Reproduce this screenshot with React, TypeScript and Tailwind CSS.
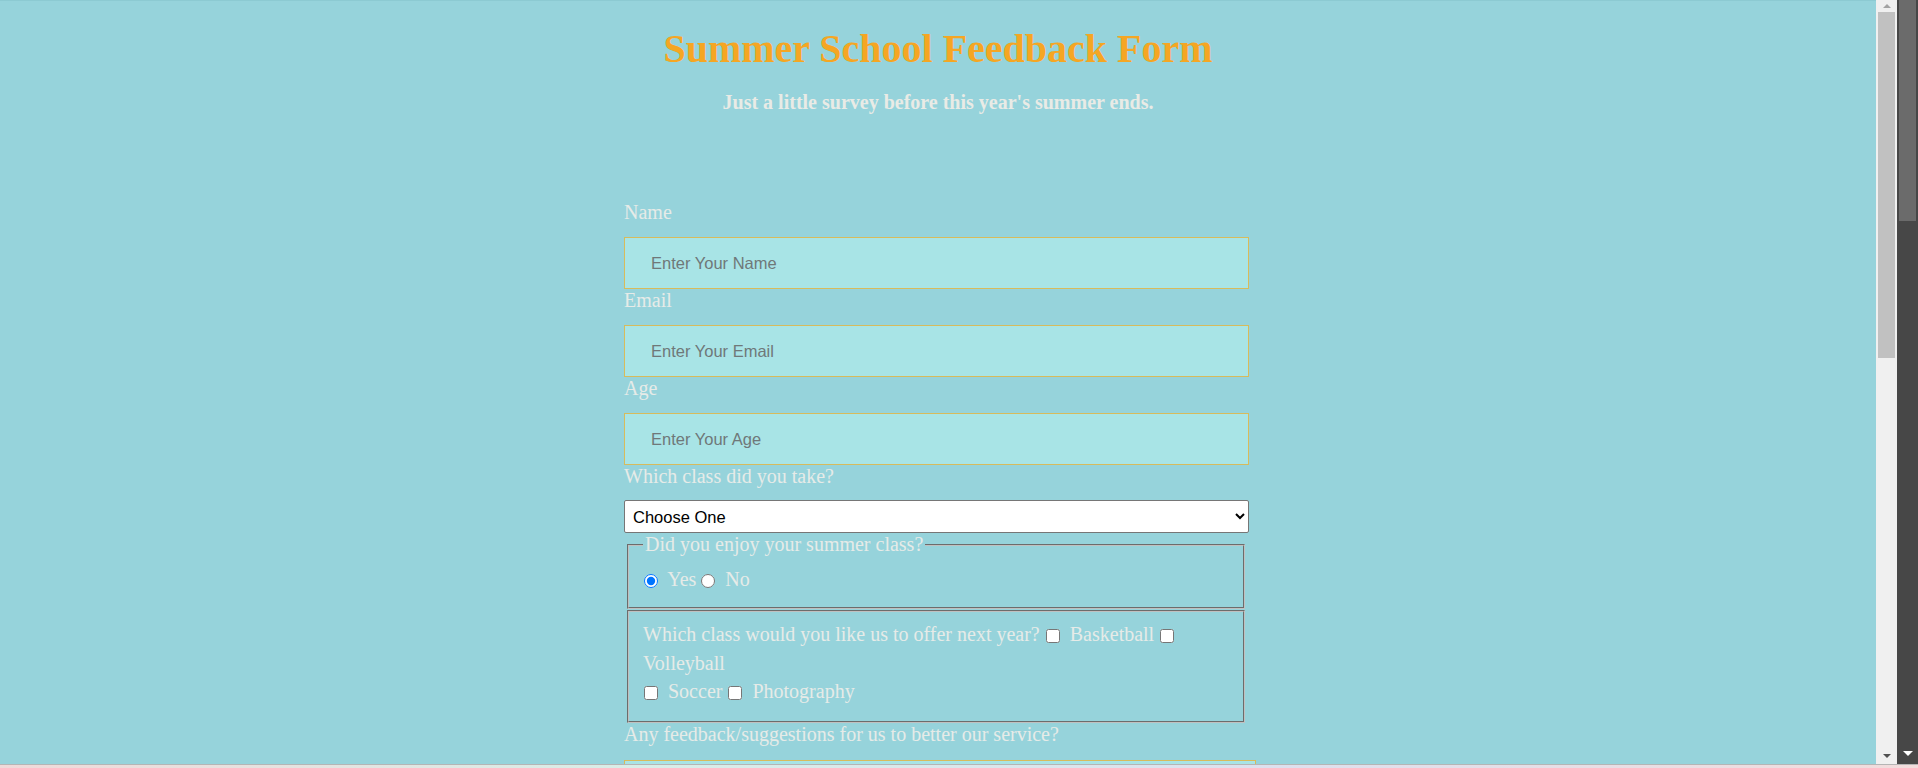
import React from "react";

const serif = "font-['Liberation_Serif','Times_New_Roman',serif]";
const sans = "font-['Liberation_Sans',Arial,sans-serif]";

const TextField = ({ label, placeholder }: { label: string; placeholder: string }) => (
	<div className="flex flex-col">
		<label className="h-[23px] text-[20px] leading-[23px] text-[#e6ebe8]">{label}</label>
		<input
			type="text"
			placeholder={placeholder}
			className={`${sans} mt-[13px] h-[52px] w-[625px] border border-[#d7bb5c] bg-[#a8e4e6] px-[26px] text-[16.5px] text-[#333] placeholder:text-[#6f7879] outline-none`}
		/>
	</div>
);

const Check = ({ label }: { label: string }) => (
	<>
		<input type="checkbox" className="ml-[6px] mr-[5px] h-[14px] w-[14px] align-[-2px]" /> {label}
	</>
);

const LightScrollbar = () => (
	<div className="flex w-[21px] shrink-0 flex-col bg-[#f0f0f0] pl-[2px] pr-[2px]">
		<div className="flex h-[12px] items-center justify-center">
			<div className="h-0 w-0 border-x-[4px] border-b-[4px] border-x-transparent border-b-[#a3a3a3]" />
		</div>
		<div className="h-[346px] bg-[#c1c1c1]" />
		<div className="flex-1" />
		<div className="flex h-[17px] items-center justify-center">
			<div className="h-0 w-0 border-x-[4px] border-t-[4px] border-x-transparent border-t-[#505050]" />
		</div>
	</div>
);

const DarkScrollbar = () => (
	<div className="flex w-[21px] shrink-0 flex-col bg-[#474747] pl-[2px] pr-[2px]">
		<div className="h-[221px] bg-[#6b6b6b]" />
		<div className="flex-1" />
		<div className="flex h-[22px] items-center justify-center">
			<div className="h-0 w-0 border-x-[5px] border-t-[5px] border-x-transparent border-t-white" />
		</div>
	</div>
);

export default function App() {
	return (
		<div className="flex h-[768px] w-[1918px] flex-col overflow-hidden bg-[#96d3db]">
			<div className="flex h-[764px] min-h-0">
				<main className={`${serif} min-w-0 flex-1 overflow-hidden border-t border-[#8ccad2]`}>
					<h1 className="mt-[25px] text-center text-[40px] font-bold leading-[46px] text-[#f5a623]">
						Summer School Feedback Form
					</h1>
					<p className="mt-[19px] text-center text-[20px] font-bold leading-[23px] text-[#e9ebe6]">
						Just a little survey before this year's summer ends.
					</p>

					<form className="mt-[87px] ml-[624px] flex w-[625px] flex-col text-[#e6ebe8]">
						<TextField label="Name" placeholder="Enter Your Name" />
						<TextField label="Email" placeholder="Enter Your Email" />
						<TextField label="Age" placeholder="Enter Your Age" />

						<label className="h-[23px] text-[20px] leading-[23px]">Which class did you take?</label>
						<select
							defaultValue=""
							className={`${sans} mt-[12px] h-[33px] w-[625px] rounded-[2px] border border-[#767676] bg-white pl-[4px] text-[16.5px] text-black`}
						>
							<option value="">Choose One</option>
							<option>Basketball</option>
							<option>Volleyball</option>
							<option>Soccer</option>
							<option>Photography</option>
						</select>

						<fieldset className="ml-[3px] w-[618px] border-2 border-[#c0c0c0] [border-style:groove] px-[14px] pb-[16px] text-[20px] leading-[23px]">
							<legend className="px-[2px]">Did you enjoy your summer class?</legend>
							<div className="mt-[12px]">
								<input type="radio" name="enjoy" defaultChecked className="ml-[1px] mr-[5px] h-[14px] w-[14px] align-[-2px]" /> Yes
								<input type="radio" name="enjoy" className="ml-[5px] mr-[5px] h-[14px] w-[14px] align-[-2px]" /> No
							</div>
						</fieldset>

						<fieldset className="mt-[1px] ml-[3px] w-[618px] border-2 border-[#c0c0c0] [border-style:groove] px-[14px] pt-[8px] pb-[16px] text-[20px]">
							<div className="leading-[29px]">
								Which class would you like us to offer next year?
								<Check label="Basketball" />
								<Check label="Volleyball" />
							</div>
							<div className="-ml-[5px] leading-[27px]">
								<Check label="Soccer" />
								<Check label="Photography" />
							</div>
						</fieldset>

						<label className="h-[23px] text-[20px] leading-[23px]">
							Any feedback/suggestions for us to better our service?
						</label>
						<textarea className="mt-[14px] h-[120px] w-[632px] shrink-0 border border-[#d7bb5c] bg-[#a8e4e6]" />
					</form>
				</main>
				<LightScrollbar />
				<DarkScrollbar />
			</div>
			<div className="h-px bg-[#b5b5b5]" />
			<div className="h-[3px] bg-[linear-gradient(90deg,#f0d9d9,#d8eee8,#dde0ee,#f2dcdc)]" />
		</div>
	);
}
